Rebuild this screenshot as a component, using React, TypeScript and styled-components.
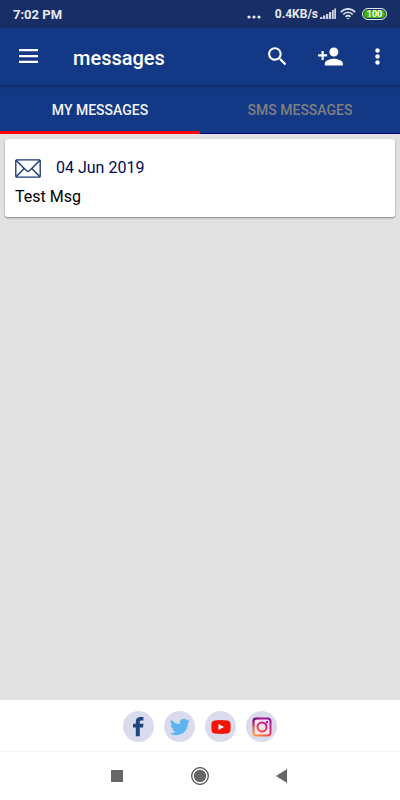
import React from "react";
import styled, { createGlobalStyle } from "styled-components";

const GlobalStyle = createGlobalStyle`
  * { box-sizing: border-box; }
  body { margin: 0; font-family: Roboto, "Liberation Sans", sans-serif; }
  button { border: 0; background: none; padding: 0; margin: 0; font: inherit; color: inherit; cursor: pointer; }
  svg { display: block; flex: none; }
`;

const Screen = styled.div`
  display: flex;
  flex-direction: column;
  min-height: 100vh;
  background: #e1e1e1;
`;

const StatusBar = styled.div`
  display: flex;
  align-items: center;
  height: 28px;
  padding: 0 13px;
  background: #172f66;
  color: #e6e9f0;
  font-size: 12px;
  font-weight: 700;
`;

const Clock = styled.span`
  font-size: 13px;
`;

const StatusIcons = styled.div`
  display: flex;
  align-items: center;
  margin-left: auto;
`;

const Speed = styled.span`
  margin: 0 2px 0 14px;
`;

const WifiSlot = styled.span`
  margin: 0 6px 0 4px;
`;

const Battery = styled.span`
  display: flex;
  align-items: center;
  justify-content: center;
  width: 25px;
  height: 12px;
  border: 1px solid #dfe6ee;
  border-radius: 6px;
  background: #42b512;
  box-shadow: inset 0 0 0 1px #172f66;
  color: #ffffff;
  font-size: 9px;
  line-height: 10px;
`;

const AppBar = styled.header`
  position: relative;
  display: flex;
  align-items: center;
  height: 57px;
  padding: 0 15px 0 16px;
  background: #133885;
  color: #ffffff;
  box-shadow: 0 1px 3px rgba(0, 0, 0, 0.35);
`;

const Title = styled.h1`
  flex: 1;
  margin: 3px 0 0 32px;
  font-size: 20px;
  line-height: 24px;
  font-weight: 500;
`;

const Actions = styled.div`
  display: flex;
  align-items: center;
  gap: 27px;
`;

const IconButton = styled.button`
  display: flex;
  align-items: center;
  justify-content: center;
`;

const Tabs = styled.nav`
  display: grid;
  grid-template-columns: 1fr 1fr;
  height: 49px;
  background: #133885;
`;

const Tab = styled.button<{ $active?: boolean }>`
  && {
    padding-top: 3px;
    border-bottom: ${(p) => (p.$active ? "3px solid #fb0007" : "1px solid #00006e")};
    padding-bottom: ${(p) => (p.$active ? "0" : "2px")};
    color: ${(p) => (p.$active ? "#f4f5fa" : "#808080")};
    font-size: 14px;
    font-weight: 500;
  }
`;

const Content = styled.main`
  flex: 1;
  padding: 5px;
`;

const Card = styled.article`
  padding: 17px 10px 8px;
  border-radius: 3px;
  background: #ffffff;
  box-shadow: 0 1px 2px rgba(0, 0, 0, 0.4);
`;

const CardHead = styled.div`
  display: flex;
  align-items: center;
  gap: 15px;
`;

const MessageDate = styled.time`
  color: #000b54;
  font-size: 16px;
  line-height: 24px;
`;

const Message = styled.p`
  margin: 5px 0 0;
  color: #000000;
  font-size: 16px;
  line-height: 24px;
`;

const Social = styled.footer`
  display: flex;
  align-items: center;
  justify-content: center;
  gap: 10px;
  height: 52px;
  padding-top: 2px;
  border-bottom: 1px solid #f5f5f5;
  background: #ffffff;
`;

const SocialLink = styled.a`
  display: flex;
  align-items: center;
  justify-content: center;
  width: 31px;
  height: 31px;
  border-radius: 50%;
  background: #dadcee;
`;

const SystemNav = styled.nav`
  display: flex;
  align-items: center;
  justify-content: center;
  gap: 62px;
  height: 48px;
  background: #ffffff;
`;

const MoreDots = () => (
  <svg width="14" height="12" viewBox="0 0 14 12" fill="#e6e9f0" aria-hidden="true">
    <circle cx="2" cy="9" r="1.6" />
    <circle cx="7" cy="9" r="1.6" />
    <circle cx="12" cy="9" r="1.6" />
  </svg>
);

const Signal = () => (
  <svg width="16" height="12" viewBox="0 0 16 12" fill="#c9cfdc" aria-hidden="true">
    <path d="M0 9h2.300v2H0zM3 7.500h2.300V11H3zM6 6h2.300v5H6zM9 4h2.300v7H9zM12 2h1.800v9H12zM14.200.500H16V11h-1.800z" />
  </svg>
);

const Wifi = () => (
  <svg width="16" height="12" viewBox="0 0 16 12" fill="none" stroke="#e0e5ee" strokeWidth="1.7" aria-hidden="true">
    <path d="M.8 4.200C5-.3 11-.3 15.200 4.200M3.200 6.500c2.800-3 6.800-3 9.600 0M5.600 8.800c1.400-1.500 3.400-1.500 4.800 0" />
    <path d="M6.600 9.900h2.800L8 11.600z" fill="#e0e5ee" stroke="none" />
  </svg>
);

const MenuIcon = () => (
  <svg width="25" height="25" viewBox="0 0 25 25" fill="#fff" aria-hidden="true">
    <path d="M3 5h19v2.300H3zM3 11h19v2.200H3zM3 16.700h19v2.200H3z" />
  </svg>
);

const SearchIcon = () => (
  <svg width="25" height="25" viewBox="0 0 24 24" fill="#fff" aria-hidden="true">
    <path d="M15.500 14h-.79l-.28-.27C15.410 12.590 16 11.110 16 9.500 16 5.910 13.090 3 9.500 3S3 5.910 3 9.500 5.910 16 9.500 16c1.610 0 3.090-.59 4.230-1.570l.27.28v.79l5 4.990L20.490 19l-4.990-5zm-6 0C7.010 14 5 11.990 5 9.500S7.010 5 9.500 5 14 7.010 14 9.500 11.990 14 9.500 14z" />
  </svg>
);

const AddPersonIcon = () => (
  <svg width="27" height="27" viewBox="0 0 24 24" fill="#fff" aria-hidden="true">
    <path d="M15 12c2.210 0 4-1.790 4-4s-1.790-4-4-4-4 1.790-4 4 1.790 4 4 4zm-9-2V7H4v3H1v2h3v3h2v-3h3v-2H6zm9 4c-2.670 0-8 1.340-8 4v2h16v-2c0-2.660-5.330-4-8-4z" />
  </svg>
);

const OverflowIcon = () => (
  <svg width="14" height="25" viewBox="0 0 14 25" fill="#fff" aria-hidden="true">
    <circle cx="6.500" cy="6.500" r="2.200" />
    <circle cx="6.500" cy="12.500" r="2.200" />
    <circle cx="6.500" cy="18.500" r="2.200" />
  </svg>
);

const Envelope = () => (
  <svg width="26" height="19" viewBox="0 0 26 19" fill="none" stroke="#163477" strokeWidth="1.3" strokeLinejoin="round" aria-hidden="true">
    <rect x=".8" y=".8" width="24.400" height="17.400" rx="1" />
    <path d="M1 1.200 11.300 11.500q1.700 1.500 3.400 0L25 1.200M1.200 17.800 9 9.500M24.800 17.800 17 9.500" />
  </svg>
);

const FacebookIcon = () => (
  <svg width="21" height="21" viewBox="0 0 21 21" fill="#20457f" aria-hidden="true">
    <path d="M7.800 20.200V11.600H5V7.800h2.800V5.500C7.800 2.500 9.500.9 12.400.9h3v3.600h-2c-1.200 0-1.600.5-1.600 1.500v1.800h3.700l-.5 3.800h-3.200v8.600z" />
  </svg>
);

const TwitterIcon = () => (
  <svg width="20" height="20" viewBox="0 0 24 24" fill="#5eb4f0" aria-hidden="true">
    <path d="M23.950 4.570a10 10 0 0 1-2.820.77 4.960 4.960 0 0 0 2.160-2.720c-.95.56-2 .96-3.130 1.180a4.920 4.920 0 0 0-8.380 4.480C7.690 8.100 4.070 6.130 1.640 3.160a4.920 4.920 0 0 0 1.520 6.570 4.900 4.900 0 0 1-2.230-.61v.06a4.920 4.920 0 0 0 3.950 4.830 5 5 0 0 1-2.210.08 4.940 4.940 0 0 0 4.600 3.420A9.870 9.870 0 0 1 0 19.540a14 14 0 0 0 7.550 2.210c9.050 0 14-7.500 14-13.980 0-.21 0-.42-.02-.63a9.940 9.940 0 0 0 2.420-2.570z" />
  </svg>
);

const YoutubeIcon = () => (
  <svg width="20" height="14" viewBox="0 0 20 14" aria-hidden="true">
    <path d="M3.500.4Q10-.3 16.500.4 19 .6 19.400 3q.5 4 0 8-.4 2.400-2.900 2.600-6.500.7-13 0Q1 13.400.6 11q-.5-4 0-8Q1 .6 3.500.4z" fill="#f61407" />
    <path d="M7.500 4v6l5.500-3z" fill="#fff" />
  </svg>
);

const InstagramIcon = () => (
  <svg width="20" height="20" viewBox="0 0 20 20" fill="none" aria-hidden="true">
    <defs>
      <linearGradient id="insta" x1="3" y1="20" x2="15" y2="0" gradientUnits="userSpaceOnUse">
        <stop offset="0" stopColor="#ffae32" />
        <stop offset=".35" stopColor="#f44b48" />
        <stop offset=".65" stopColor="#d3207e" />
        <stop offset="1" stopColor="#8b15a5" />
      </linearGradient>
      <radialGradient id="corner" cx="1" cy="1" r="10" gradientUnits="userSpaceOnUse">
        <stop offset="0" stopColor="#35108a" />
        <stop offset="1" stopColor="#8b15a5" stopOpacity="0" />
      </radialGradient>
    </defs>
    <rect x="1.500" y="1.500" width="17" height="17" rx="3" fill="#f2e5f2" stroke="url(#insta)" strokeWidth="2" />
    <rect x="1.500" y="1.500" width="17" height="17" rx="3" stroke="url(#corner)" strokeWidth="2" />
    <circle cx="10" cy="10" r="4.500" stroke="url(#insta)" strokeWidth="2" />
    <circle cx="15" cy="5" r="1.200" fill="#b5179a" />
  </svg>
);

export default function App() {
  return (
    <>
      <GlobalStyle />
      <Screen>
        <StatusBar>
          <Clock>7:02 PM</Clock>
          <StatusIcons>
            <MoreDots />
            <Speed>0.4KB/s</Speed>
            <Signal />
            <WifiSlot><Wifi /></WifiSlot>
            <Battery>100</Battery>
          </StatusIcons>
        </StatusBar>
        <AppBar>
          <IconButton aria-label="Menu"><MenuIcon /></IconButton>
          <Title>messages</Title>
          <Actions>
            <IconButton aria-label="Search"><SearchIcon /></IconButton>
            <IconButton aria-label="Add contact"><AddPersonIcon /></IconButton>
            <IconButton aria-label="More options"><OverflowIcon /></IconButton>
          </Actions>
        </AppBar>
        <Tabs>
          <Tab $active>MY MESSAGES</Tab>
          <Tab>SMS MESSAGES</Tab>
        </Tabs>
        <Content>
          <Card>
            <CardHead>
              <Envelope />
              <MessageDate dateTime="2019-06-04">04 Jun 2019</MessageDate>
            </CardHead>
            <Message>Test Msg</Message>
          </Card>
        </Content>
        <Social>
          <SocialLink href="#facebook" aria-label="Facebook"><FacebookIcon /></SocialLink>
          <SocialLink href="#twitter" aria-label="Twitter"><TwitterIcon /></SocialLink>
          <SocialLink href="#youtube" aria-label="YouTube"><YoutubeIcon /></SocialLink>
          <SocialLink href="#instagram" aria-label="Instagram"><InstagramIcon /></SocialLink>
        </Social>
        <SystemNav>
          <IconButton aria-label="Recent apps">
            <svg width="20" height="20" viewBox="0 0 20 20"><path d="M3 4h12v12H3z" fill="#666" /></svg>
          </IconButton>
          <IconButton aria-label="Home">
            <svg width="20" height="20" viewBox="0 0 20 20">
              <circle cx="10" cy="10" r="8.300" fill="none" stroke="#444" strokeWidth="1.200" />
              <circle cx="10" cy="10" r="6.200" fill="#666" />
            </svg>
          </IconButton>
          <IconButton aria-label="Back">
            <svg width="20" height="20" viewBox="0 0 20 20"><path d="M15 3v14L4 10z" fill="#666" /></svg>
          </IconButton>
        </SystemNav>
      </Screen>
    </>
  );
}
